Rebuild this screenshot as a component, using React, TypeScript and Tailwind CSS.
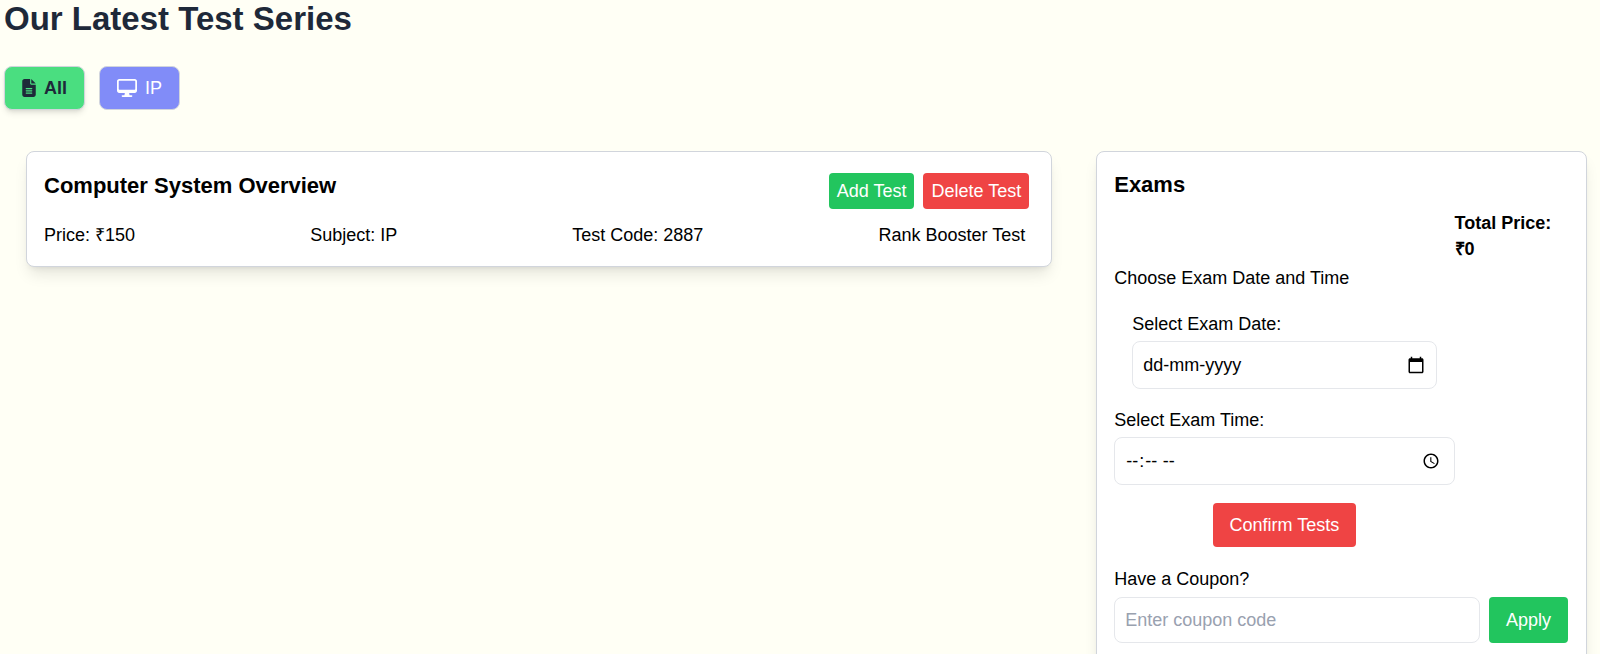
import type { InputHTMLAttributes } from "react";
import { FaFileLines } from "react-icons/fa6";

const fieldClass =
  "w-full rounded-lg border border-gray-200 bg-white px-[10px] text-[18px] leading-[26px] text-black";

function CalendarIcon() {
  return (
    <svg viewBox="0 0 24 24" className="size-[18px]" fill="currentColor" aria-hidden="true">
      <path d="M20 3h-1V1h-2v2H7V1H5v2H4c-1.1 0-2 .9-2 2v16c0 1.1.9 2 2 2h16c1.1 0 2-.9 2-2V5c0-1.1-.9-2-2-2zm0 18H4V8h16v13z" />
    </svg>
  );
}

function DesktopIcon() {
  return (
    <svg viewBox="0 0 576 512" className="h-[18px] w-[20px]" fill="currentColor" aria-hidden="true">
      <path
        fillRule="evenodd"
        d="M64 0h448c35 0 64 29 64 64v272c0 35-29 64-64 64H350l12 64h58c13 0 24 11 24 24s-11 24-24 24H156c-13 0-24-11-24-24s11-24 24-24h58l12-64H64c-35 0-64-29-64-64V64C0 29 29 0 64 0zm4 48c-11 0-18 7-18 18v220c0 11 7 18 18 18h440c11 0 18-7 18-18V66c0-11-7-18-18-18z"
      />
    </svg>
  );
}

function TextField(props: InputHTMLAttributes<HTMLInputElement>) {
  return <input type="text" {...props} />;
}

function TestCard() {
  return (
    <article className="rounded-lg border border-gray-300 bg-white p-[17px] shadow-lg">
      <div className="flex items-start justify-between pt-[2px] pr-[5px]">
        <h2 className="text-[22px] leading-[30px] font-bold">Computer System Overview</h2>
        <div className="flex gap-[9px] pt-[2px]">
          <button type="button" className="rounded bg-[#22c55e] px-[8px] py-[5px] text-white">Add Test</button>
          <button type="button" className="rounded bg-[#ef4444] px-[8px] py-[5px] text-white">Delete Test</button>
        </div>
      </div>
      <div className="mt-[13px] flex justify-between pr-[9px] pb-[1px]">
        <p>Price: ₹150</p>
        <p>Subject: IP</p>
        <p>Test Code: 2887</p>
        <p>Rank Booster Test</p>
      </div>
    </article>
  );
}

function ExamPanel() {
  return (
    <aside className="rounded-lg border border-gray-300 bg-white pt-[18px] pr-[18px] pb-[72px] pl-[17px] shadow-lg">
      <h2 className="text-[22px] leading-[30px] font-bold">Exams</h2>
      <div className="mt-[10px] flex justify-end">
        <p className="w-1/4 font-bold">
          Total Price:
          <br />
          ₹0
        </p>
      </div>
      <p className="mt-[3px]">Choose Exam Date and Time</p>
      <div className="w-3/4">
        <div className="mx-[18px] mt-[20px]">
          <label htmlFor="exam-date" className="block">Select Exam Date:</label>
          <div className="relative mt-[4px]">
            <TextField id="exam-date" placeholder="dd-mm-yyyy" className={`${fieldClass} block h-[48px] placeholder:text-black`} />
            <button type="button" aria-label="Open calendar" className="absolute inset-y-0 right-[12px]">
              <CalendarIcon />
            </button>
          </div>
        </div>
        <div className="mt-[18px]">
          <label htmlFor="exam-time" className="block">Select Exam Time:</label>
          <input id="exam-time" type="time" className={`${fieldClass} mt-[4px] block h-[48px]`} />
        </div>
        <div className="mt-[18px] flex justify-center">
          <button type="button" className="rounded bg-[#ef4444] px-[17px] py-[9px] text-white">Confirm Tests</button>
        </div>
      </div>
      <label htmlFor="coupon" className="mt-[19px] block">Have a Coupon?</label>
      <div className="mt-[5px] flex gap-[9px]">
        <TextField id="coupon" placeholder="Enter coupon code" className={`${fieldClass} min-w-0 flex-1 py-[9px] placeholder:text-gray-400`} />
        <button type="button" className="rounded bg-[#22c55e] px-[17px] text-white">Apply</button>
      </div>
    </aside>
  );
}

export default function App() {
  return (
    <main className="min-h-screen bg-[#fffff5] pb-4 font-['Liberation_Sans',Arial,sans-serif] text-[18px] leading-[26px] text-black">
      <h1 className="pl-1 text-[33px] leading-[38px] font-bold text-gray-800">Our Latest Test Series</h1>
      <nav className="mt-[28px] flex gap-[14px] pl-1">
        <button type="button" className="flex items-center gap-[8px] rounded-lg border border-gray-300 bg-[#4ade80] px-[17px] py-[8px] font-bold text-gray-800 shadow-md">
          <FaFileLines className="h-[18px] w-[14px]" />
          All
        </button>
        <button type="button" className="flex items-center gap-[8px] rounded-lg border border-gray-300 bg-[#818cf8] px-[17px] py-[8px] text-white">
          <DesktopIcon />
          IP
        </button>
      </nav>
      <div className="mt-[41px] grid grid-cols-[23fr_11fr] items-start gap-[44px] pr-[13px] pl-[26px]">
        <TestCard />
        <ExamPanel />
      </div>
    </main>
  );
}
